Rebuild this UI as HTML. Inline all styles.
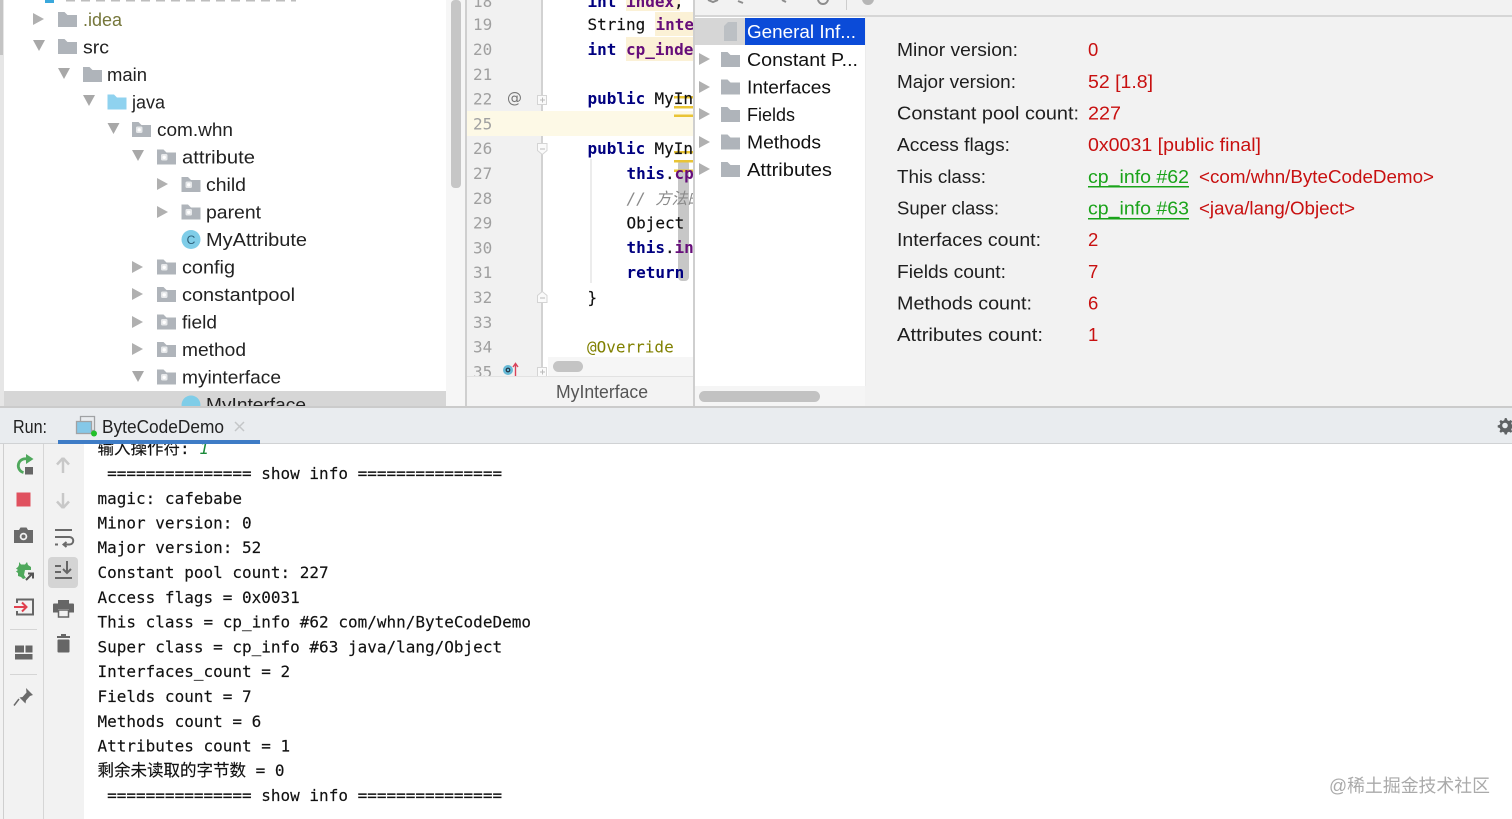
<!DOCTYPE html>
<html><head><meta charset="utf-8"><title>ByteCodeDemo</title>
<style>
html,body{margin:0;padding:0;background:#fff;overflow:hidden;width:1512px;height:819px}
svg{display:block;filter:blur(.3px)}
.s{font-family:"Liberation Sans","Noto Sans CJK SC",sans-serif;font-size:18px;fill:#222}
.i{font-family:"Liberation Sans",sans-serif;font-size:18.5px;fill:#1e1e1e}
.v{font-family:"Liberation Sans",sans-serif;font-size:18.5px;fill:#c81010}
.l{font-family:"Liberation Sans",sans-serif;font-size:18.5px;fill:#1aa31a}
.m{font-family:"DejaVu Sans Mono","Noto Sans CJK SC",monospace;font-size:16px;fill:#111;white-space:pre;stroke:#111;stroke-width:.15}
.n{font-family:"DejaVu Sans Mono",monospace;font-size:16px;fill:#a0a0a0}
.k{font-family:"DejaVu Sans Mono",monospace;font-size:16px;font-weight:bold;fill:#000080}
.f{font-family:"DejaVu Sans Mono",monospace;font-size:16px;font-weight:bold;fill:#660e7a}
.c{font-size:16.5px}
</style></head><body>
<svg width="1512" height="819" viewBox="0 0 1512 819" xmlns="http://www.w3.org/2000/svg">
<defs>
<g id="fd"><path d="M0 0h6.500l3 3H19v12H0z" fill="#afb4ba"/></g>
<g id="fj"><path d="M0 0h6.500l3 3H19v12H0z" fill="#8fd2ef"/></g>
<g id="fp"><path d="M0 0h6.500l3 3H19v12H0z" fill="#afb4ba"/><rect x="4" y="4.500" width="6.500" height="6.500" rx="1.500" fill="#e6e8ea"/><circle cx="7.200" cy="7.800" r="1.700" fill="#fff"/></g>
<path id="ar" d="M0 0L11 6L0 12z" fill="#b0b0b0"/>
<path id="ad" d="M0 0H12L6 11z" fill="#a8a8a8"/>
</defs>

<rect width="1512" height="819" fill="#fff"/>
<!-- project tree -->
<rect x="0" y="0" width="4" height="406" fill="#e6e6e6"/>
<rect x="0" y="0" width="3" height="55" fill="#c4c4c4"/>
<rect x="446" y="0" width="19" height="406" fill="#f6f6f6"/>
<rect x="451" y="0" width="10" height="188" rx="4" fill="#c6c6c6"/>
<rect x="465" y="0" width="2" height="406" fill="#cfcfcf"/>
<rect x="4" y="391" width="442" height="15" fill="#d6d6d6"/>

<rect x="45" y="-8" width="9" height="11" fill="#3aa8dc"/>
<path d="M66 .5h230" stroke="#888" stroke-width="2" stroke-dasharray="9 6" opacity=".55"/>

<use href="#ar" x="33" y="13"/><use href="#fd" x="58" y="12"/>
<text class="s" x="83" y="26" textLength="39" lengthAdjust="spacingAndGlyphs" style="fill:#75763a">.idea</text>
<use href="#ad" x="33" y="40"/><use href="#fd" x="58" y="39"/>
<text class="s" x="83" y="53.500" textLength="26" lengthAdjust="spacingAndGlyphs">src</text>
<use href="#ad" x="58" y="68"/><use href="#fd" x="83" y="67"/>
<text class="s" x="107" y="81" textLength="40" lengthAdjust="spacingAndGlyphs">main</text>
<use href="#ad" x="83" y="95"/><use href="#fj" x="107.500" y="94.500"/>
<text class="s" x="132" y="108.500" textLength="33" lengthAdjust="spacingAndGlyphs">java</text>
<use href="#ad" x="107.500" y="123"/><use href="#fp" x="132" y="122"/>
<text class="s" x="157" y="136" textLength="76" lengthAdjust="spacingAndGlyphs">com.whn</text>
<use href="#ad" x="132" y="150"/><use href="#fp" x="157" y="149.500"/>
<text class="s" x="182" y="163.500" textLength="73" lengthAdjust="spacingAndGlyphs">attribute</text>
<use href="#ar" x="157" y="178"/><use href="#fp" x="181.500" y="177"/>
<text class="s" x="206" y="191" textLength="40" lengthAdjust="spacingAndGlyphs">child</text>
<use href="#ar" x="157" y="206"/><use href="#fp" x="181.500" y="204.500"/>
<text class="s" x="206" y="218.500" textLength="55" lengthAdjust="spacingAndGlyphs">parent</text>
<circle cx="191" cy="239.500" r="9.500" fill="#7fcde8"/>
<text x="191" y="244" text-anchor="middle" font-family="Liberation Sans" font-size="12" fill="#2b5f78">C</text>
<text class="s" x="206" y="246" textLength="101" lengthAdjust="spacingAndGlyphs">MyAttribute</text>
<use href="#ar" x="132" y="261"/><use href="#fp" x="157" y="259.500"/>
<text class="s" x="182" y="273.500" textLength="53" lengthAdjust="spacingAndGlyphs">config</text>
<use href="#ar" x="132" y="288"/><use href="#fp" x="157" y="287"/>
<text class="s" x="182" y="301" textLength="113" lengthAdjust="spacingAndGlyphs">constantpool</text>
<use href="#ar" x="132" y="316"/><use href="#fp" x="157" y="314.500"/>
<text class="s" x="182" y="328.500" textLength="35" lengthAdjust="spacingAndGlyphs">field</text>
<use href="#ar" x="132" y="343"/><use href="#fp" x="157" y="342"/>
<text class="s" x="182" y="356" textLength="64" lengthAdjust="spacingAndGlyphs">method</text>
<use href="#ad" x="132" y="371"/><use href="#fp" x="157" y="369.500"/>
<text class="s" x="182" y="383.500" textLength="99" lengthAdjust="spacingAndGlyphs">myinterface</text>
<circle cx="191" cy="405" r="9.500" fill="#7fcde8"/>
<text class="s" x="206" y="411" textLength="100" lengthAdjust="spacingAndGlyphs">MyInterface</text>

<!-- editor -->
<rect x="467" y="0" width="75" height="406" fill="#f1f1f1"/>
<rect x="541" y="0" width="2" height="376" fill="#d2d2d2"/>
<rect x="543" y="0" width="150" height="376" fill="#fff"/>
<rect x="626" y="0" width="54" height="11" fill="#fbf1d6"/>
<rect x="655" y="12" width="38" height="24" fill="#fbf1d6"/>
<rect x="626" y="37" width="67" height="24" fill="#fbf1d6"/>
<rect x="467" y="111" width="226" height="25" fill="#fdf9e6"/>
<rect x="590" y="159" width="2" height="124" fill="#ececec"/>
<rect x="678" y="160" width="11" height="121" rx="4" fill="#bdbdbd" opacity=".85"/>
<g fill="#e9c435">
<rect x="674" y="96" width="19" height="2.500"/><rect x="674" y="106" width="19" height="2.500"/><rect x="674" y="114.500" width="19" height="2.500"/>
<rect x="674" y="151" width="19" height="2.500"/><rect x="674" y="160" width="19" height="2.500"/><rect x="674" y="169.500" width="19" height="2.500"/>
</g>

<text class="n" x="473" y="7">18</text>
<text class="n" x="473" y="30">19</text>
<text class="n" x="473" y="55">20</text>
<text class="n" x="473" y="80">21</text>
<text class="n" x="473" y="104.500">22</text>
<text class="n" x="473" y="129.500">25</text>
<text class="n" x="473" y="154">26</text>
<text class="n" x="473" y="179">27</text>
<text class="n" x="473" y="204">28</text>
<text class="n" x="473" y="228.500">29</text>
<text class="n" x="473" y="253.500">30</text>
<text class="n" x="473" y="278">31</text>
<text class="n" x="473" y="303">32</text>
<text class="n" x="473" y="328">33</text>
<text class="n" x="473" y="352.500">34</text>
<text class="n" x="473" y="377.500">35</text>
<text x="507" y="103" font-family="DejaVu Sans" font-size="15" fill="#777">@</text>
<g fill="#fafafa" stroke="#d4d4d4">
<rect x="537.500" y="95.500" width="9" height="9"/>
<path d="M537.500 143.500h9.500v7l-4.700 4-4.800-4z"/>
<path d="M537.500 302.500v-7l4.800-4 4.700 4v7z"/>
<rect x="537.500" y="367.500" width="9" height="9"/>
</g>
<path d="M540 100h5M542.500 97.500v5M540 149h5M540 298h5M540 372h5M542.500 369.500v5" stroke="#bbb" fill="none"/>
<circle cx="508" cy="370" r="5" fill="#65b9d6"/><circle cx="508" cy="370" r="1.800" fill="none" stroke="#234" stroke-width="1.200"/>
<path d="M515.500 377v-13M513 367l2.500-3.500 2.500 3.500" stroke="#d8435a" stroke-width="1.400" fill="none"/>

<text class="k" x="587.500" y="7">int</text><text class="f" x="626" y="7">index</text><text class="m" x="674" y="7">,</text>
<text class="m" x="587.500" y="30">String</text><text class="f" x="655.500" y="30">inte</text>
<text class="k" x="587.500" y="55">int</text><text class="f" x="626" y="55">cp_inde</text>
<text class="k" x="587.500" y="104">public</text><text class="m" x="654.500" y="104">MyIn</text>
<text class="k" x="587.500" y="154">public</text><text class="m" x="654.500" y="154">MyIn</text>
<text class="k" x="626.500" y="179">this</text><text class="m" x="665" y="179">.</text><text class="f" x="674.500" y="179">cp</text>
<text class="m" x="626.500" y="204" style="fill:#8a8a8a;stroke:none;font-style:italic">// 方法的</text>
<text class="m" x="626.500" y="228.500">Object</text>
<text class="k" x="626.500" y="253">this</text><text class="m" x="665" y="253">.</text><text class="f" x="674.500" y="253">in</text>
<text class="k" x="626.500" y="278">return</text>
<text class="m" x="587.500" y="303">}</text>
<text class="m" x="587" y="352.500" style="fill:#808000;stroke:none">@Override</text>

<rect x="548" y="357" width="145" height="19" fill="#f6f6f6"/>
<rect x="553" y="361" width="30" height="11" rx="5.500" fill="#c4c4c4"/>
<rect x="467" y="376" width="227" height="30" fill="#f3f3f3"/>
<rect x="467" y="376" width="227" height="1" fill="#e2e2e2"/>
<text class="s" x="556" y="398" textLength="92" lengthAdjust="spacingAndGlyphs" style="fill:#555">MyInterface</text>

<!-- plugin panel -->
<rect x="693" y="0" width="2" height="406" fill="#cfcfcf"/>
<rect x="695" y="0" width="817" height="406" fill="#f2f2f2"/>
<rect x="695" y="15" width="817" height="2" fill="#d6d6d6"/>
<rect x="695" y="17" width="170" height="369" fill="#fff"/>
<rect x="865" y="17" width="1" height="369" fill="#ececec"/>
<rect x="695" y="18" width="50" height="27" fill="#d6d6d6"/>
<rect x="745" y="18" width="120" height="27" fill="#0b4bd8"/>
<g stroke="#8d8d8d" stroke-width="2" fill="none"><path d="M708 0l5 2 5-2M738 1l5 2M782 0l4 2"/><circle cx="823" cy="-1" r="5"/></g>
<rect x="846" y="0" width="1" height="10" fill="#cdcdcd"/><circle cx="868" cy="-1" r="6" fill="#b6b6b6"/>
<path d="M724 26l4-4h9v19h-13z" fill="#bcc0c4"/>
<text class="i" x="747" y="38" textLength="109" lengthAdjust="spacingAndGlyphs" style="fill:#fff">General Inf...</text>
<use href="#ar" x="699" y="53"/><use href="#fd" x="721" y="52"/>
<text class="i" x="747" y="66" textLength="111" lengthAdjust="spacingAndGlyphs" style="fill:#111">Constant P...</text>
<use href="#ar" x="699" y="81"/><use href="#fd" x="721" y="79.500"/>
<text class="i" x="747" y="93.500" textLength="84" lengthAdjust="spacingAndGlyphs" style="fill:#111">Interfaces</text>
<use href="#ar" x="699" y="108"/><use href="#fd" x="721" y="107"/>
<text class="i" x="747" y="121" textLength="48" lengthAdjust="spacingAndGlyphs" style="fill:#111">Fields</text>
<use href="#ar" x="699" y="136"/><use href="#fd" x="721" y="134.500"/>
<text class="i" x="747" y="148.500" textLength="74" lengthAdjust="spacingAndGlyphs" style="fill:#111">Methods</text>
<use href="#ar" x="699" y="163"/><use href="#fd" x="721" y="162"/>
<text class="i" x="747" y="176" textLength="85" lengthAdjust="spacingAndGlyphs" style="fill:#111">Attributes</text>
<rect x="695" y="386" width="170" height="20" fill="#f5f5f5"/>
<rect x="699" y="391" width="121" height="11" rx="5.500" fill="#c2c2c2"/>

<text class="i" x="897" y="56" textLength="121" lengthAdjust="spacingAndGlyphs">Minor version:</text><text class="v" x="1088" y="56">0</text>
<text class="i" x="897" y="88" textLength="119" lengthAdjust="spacingAndGlyphs">Major version:</text><text class="v" x="1088" y="88" textLength="65" lengthAdjust="spacingAndGlyphs">52 [1.8]</text>
<text class="i" x="897" y="119.500" textLength="182" lengthAdjust="spacingAndGlyphs">Constant pool count:</text><text class="v" x="1088" y="119.500" textLength="33" lengthAdjust="spacingAndGlyphs">227</text>
<text class="i" x="897" y="151" textLength="113" lengthAdjust="spacingAndGlyphs">Access flags:</text><text class="v" x="1088" y="151" textLength="173" lengthAdjust="spacingAndGlyphs">0x0031 [public final]</text>
<text class="i" x="897" y="183" textLength="89" lengthAdjust="spacingAndGlyphs">This class:</text><text class="l" x="1088" y="183" textLength="101" lengthAdjust="spacingAndGlyphs">cp_info #62</text><text class="v" x="1199" y="183" textLength="235" lengthAdjust="spacingAndGlyphs">&lt;com/whn/ByteCodeDemo&gt;</text>
<rect x="1088" y="186" width="101" height="1.500" fill="#1aa31a"/>
<text class="i" x="897" y="214.500" textLength="102" lengthAdjust="spacingAndGlyphs">Super class:</text><text class="l" x="1088" y="214.500" textLength="101" lengthAdjust="spacingAndGlyphs">cp_info #63</text><text class="v" x="1199" y="214.500" textLength="156" lengthAdjust="spacingAndGlyphs">&lt;java/lang/Object&gt;</text>
<rect x="1088" y="218" width="101" height="1.500" fill="#1aa31a"/>
<text class="i" x="897" y="246" textLength="144" lengthAdjust="spacingAndGlyphs">Interfaces count:</text><text class="v" x="1088" y="246">2</text>
<text class="i" x="897" y="278" textLength="109" lengthAdjust="spacingAndGlyphs">Fields count:</text><text class="v" x="1088" y="278">7</text>
<text class="i" x="897" y="309.500" textLength="135" lengthAdjust="spacingAndGlyphs">Methods count:</text><text class="v" x="1088" y="309.500">6</text>
<text class="i" x="897" y="341" textLength="146" lengthAdjust="spacingAndGlyphs">Attributes count:</text><text class="v" x="1088" y="341">1</text>

<!-- console -->
<rect x="0" y="444" width="1512" height="375" fill="#fff"/>
<text class="m" x="97.500" y="454"><tspan class="c">输入操作符</tspan>: <tspan style="fill:#1a8a3a;stroke:none;font-style:italic">1</tspan></text>
<text class="m" x="97.500" y="479"> =============== show info ===============</text>
<text class="m" x="97.500" y="504">magic: cafebabe</text>
<text class="m" x="97.500" y="528.500">Minor version: 0</text>
<text class="m" x="97.500" y="553">Major version: 52</text>
<text class="m" x="97.500" y="578">Constant pool count: 227</text>
<text class="m" x="97.500" y="603">Access flags = 0x0031</text>
<text class="m" x="97.500" y="627.500">This class = cp_info #62 com/whn/ByteCodeDemo</text>
<text class="m" x="97.500" y="652.500">Super class = cp_info #63 java/lang/Object</text>
<text class="m" x="97.500" y="677">Interfaces_count = 2</text>
<text class="m" x="97.500" y="702">Fields count = 7</text>
<text class="m" x="97.500" y="727">Methods count = 6</text>
<text class="m" x="97.500" y="751.500">Attributes count = 1</text>
<text class="m" x="97.500" y="776"><tspan class="c">剩余未读取的字节数</tspan> = 0</text>
<text class="m" x="97.500" y="801"> =============== show info ===============</text>

<!-- run header -->
<rect x="0" y="406" width="1512" height="2" fill="#cbcbcb"/>
<rect x="0" y="408" width="1512" height="35" fill="#e9ecef"/>
<rect x="0" y="443" width="1512" height="1" fill="#d0d2d4"/>
<text class="i" x="13" y="433" textLength="34" lengthAdjust="spacingAndGlyphs">Run:</text>
<path d="M80.500 421v-4.500h14v14h-3" fill="none" stroke="#a0a2a4" stroke-width="1.300"/>
<rect x="76.500" y="421.500" width="15" height="12" fill="#85c8e8" stroke="#a0a2a4" stroke-width="1.300"/>
<circle cx="94" cy="433.500" r="3" fill="#22c02a"/>
<text class="s" x="102" y="433" textLength="122" lengthAdjust="spacingAndGlyphs">ByteCodeDemo</text>
<path d="M235 422l9 9M244 422l-9 9" stroke="#c4c6c8" stroke-width="1.500"/>
<rect x="58" y="440" width="202" height="4" fill="#3e7cc6"/>
<path d="M1505 418l1.800.3.600 2 1.600.7 1.800-1 1.400 1.400-1 1.800.7 1.600 2 .6v2l-2 .6-.7 1.600 1 1.800-1.400 1.400-1.800-1-1.600.7-.6 2h-2l-.6-2-1.600-.7-1.800 1-1.400-1.400 1-1.800-.7-1.600-2-.6v-2l2-.6.700-1.600-1-1.800 1.400-1.400 1.800 1 1.600-.7.600-2z" fill="#5f6264"/>
<circle cx="1505" cy="425.500" r="2.800" fill="#e9ecef"/>

<!-- run side bars -->
<rect x="0" y="444" width="84" height="375" fill="#f2f2f2"/>
<rect x="3" y="444" width="1" height="375" fill="#cfcfcf"/>
<rect x="43" y="444" width="1" height="375" fill="#d6d6d6"/>

<path d="M27 459A6.700 6.700 0 1 0 23.500 472.500" fill="none" stroke="#4fa85c" stroke-width="2.800"/>
<path d="M26 454l7.500 5-7.500 5z" fill="#4fa85c"/>
<rect x="25" y="467" width="8" height="7.500" fill="#666"/>
<rect x="16.500" y="492.500" width="14" height="14" fill="#e0515f"/>
<path d="M14 530h5l1.500-2.500h6l1.500 2.500h5v13H14z" fill="#6a6a6a"/><circle cx="23.500" cy="536.500" r="3.800" fill="#f2f2f2"/><circle cx="23.500" cy="536.500" r="2" fill="#6a6a6a"/>
<path d="M19 562l2 2.500h4l2-2.500 1 3 3 2v3h-6l-1 5 2 3-3 1-2-2-3-1v-3l-2-1.500 2-1.500-2-1.500 2-1.500 1-2z" fill="#4fa85c"/>
<path d="M26 580l6-6M28 573.500h5v5" stroke="#555" stroke-width="2" fill="none"/>
<path d="M17 603v-3.500h16v15H17V611" fill="none" stroke="#666" stroke-width="2"/>
<path d="M14 607h12M22 602.500l4.500 4.500-4.500 4.500" fill="none" stroke="#e0404e" stroke-width="2"/>
<rect x="10" y="629" width="27" height="1" fill="#d5d5d5"/>
<rect x="15" y="645.500" width="9" height="7" fill="#666"/><rect x="25.500" y="645.500" width="7" height="7" fill="#666"/><rect x="15" y="654" width="17.500" height="5.500" fill="#666"/>
<rect x="10" y="674" width="27" height="1" fill="#d5d5d5"/>
<path d="M26 688l7 7-3 1-4 4.500-.5 3-6-6 3-.5 4-4.500z" fill="#6a6a6a"/><path d="M19 699l-5 6.500" stroke="#6a6a6a" stroke-width="1.500"/>

<path d="M63 458l-6 6.500M63 458l6 6.500M63 458v15" stroke="#c8c8c8" stroke-width="2.500" fill="none"/>
<path d="M63 508l-6-6.500M63 508l6-6.500M63 508v-15" stroke="#c8c8c8" stroke-width="2.500" fill="none"/>
<path d="M55 530h17M55 537h14.500a3.500 3.500 0 0 1 0 7.500H64M66.500 542l-3 2.500 3 2.500" stroke="#6a6a6a" stroke-width="2" fill="none"/>
<path d="M55 544.500h3" stroke="#6a6a6a" stroke-width="2"/>
<rect x="48" y="557" width="30" height="31" rx="4" fill="#d4d4d4"/>
<path d="M55 566h6M55 572h6M55 578h17M67 561v12M63 569l4 4 4-4" stroke="#666" stroke-width="2" fill="none"/>
<path d="M58 600h11v5h-11z" fill="#666"/><path d="M54 603.500h19a1 1 0 0 1 1 1v8h-5v-3.500h-11v3.500h-5v-8a1 1 0 0 1 1-1z" fill="#666"/><rect x="58.500" y="610" width="10" height="7" fill="#f2f2f2" stroke="#666" stroke-width="1.500"/>
<rect x="57" y="636" width="13" height="2" fill="#666"/><rect x="61" y="634" width="5" height="2" fill="#666"/><rect x="57.500" y="639.500" width="12" height="13" rx="1" fill="#666"/>

<!-- watermark -->
<text x="1329" y="792" font-family="Liberation Sans,Noto Sans CJK SC,sans-serif" font-size="18" fill="#aaa" textLength="161" lengthAdjust="spacingAndGlyphs">@稀土掘金技术社区</text>
</svg>
</body></html>
